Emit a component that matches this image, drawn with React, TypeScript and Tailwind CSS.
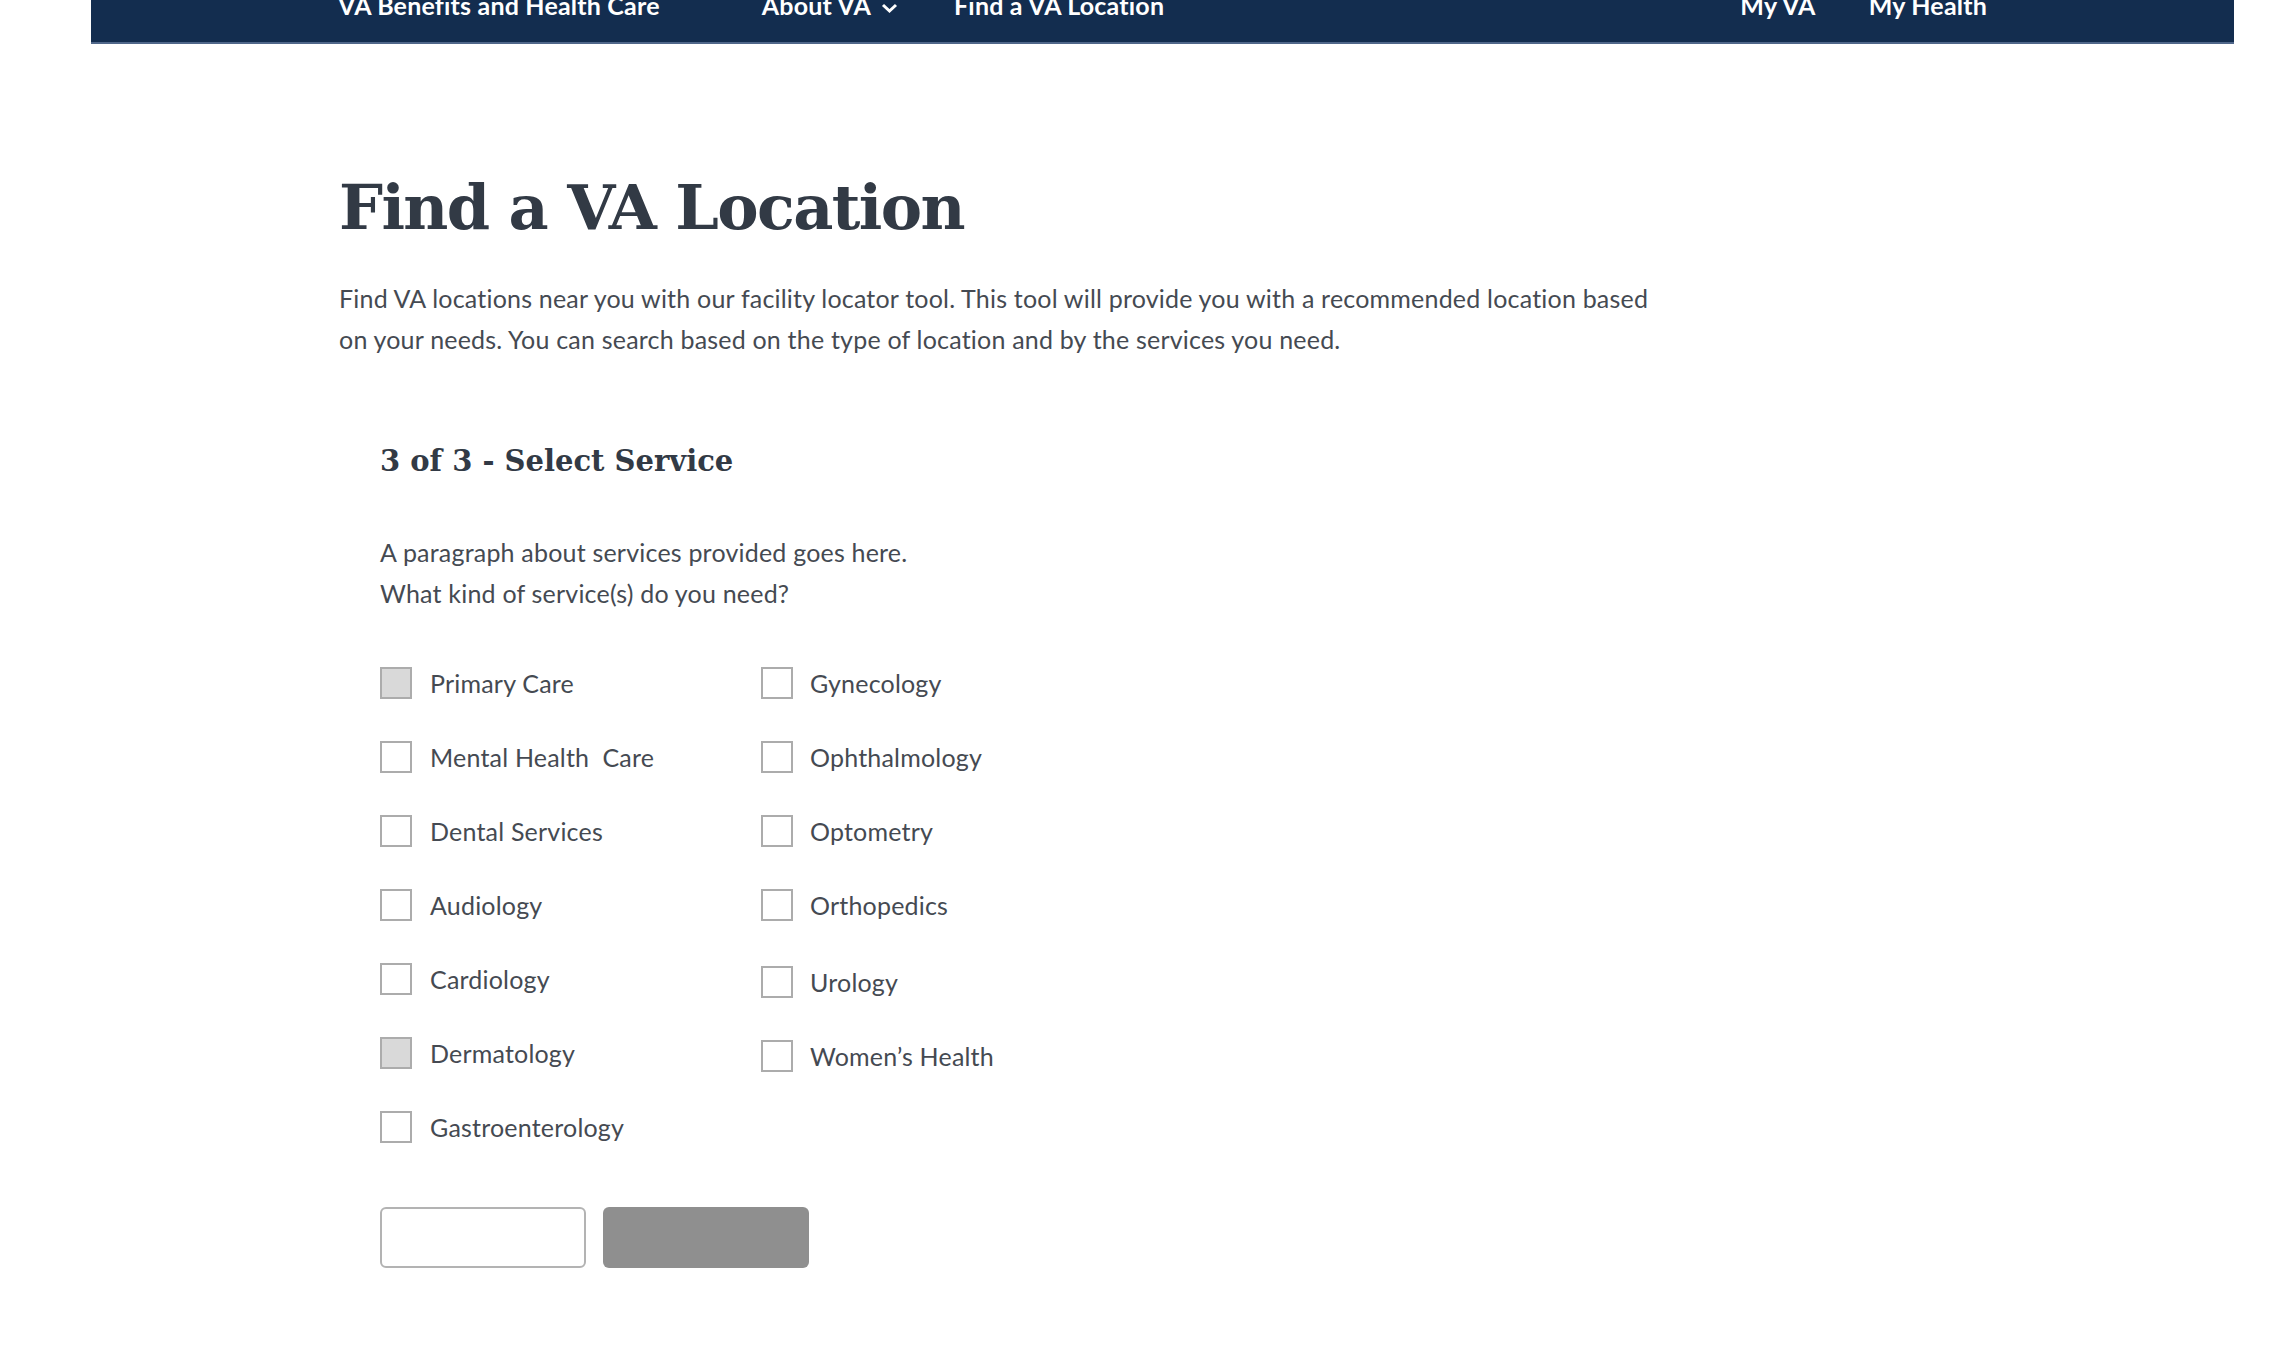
import React from "react";

const body = { fontFamily: "Lato, 'Open Sans', sans-serif" };
const slab = { fontFamily: "'DejaVu Serif', 'Liberation Serif', serif" };

type Item = { label: string; checked?: boolean; shift?: boolean };

const left: Item[] = [
  { label: "Primary Care", checked: true },
  { label: "Mental Health  Care" },
  { label: "Dental Services" },
  { label: "Audiology" },
  { label: "Cardiology" },
  { label: "Dermatology", checked: true },
  { label: "Gastroenterology" },
];

const right: Item[] = [
  { label: "Gynecology" },
  { label: "Ophthalmology" },
  { label: "Optometry" },
  { label: "Orthopedics" },
  { label: "Urology", shift: true },
  { label: "Women\u2019s Health" },
];

function Check({ item, gapClass }: { item: Item; gapClass: string }) {
  return (
    <div className={`flex items-center h-[32px] ${gapClass} ${item.shift ? "mt-[3px]" : ""}`}>
      <span
        className={`block w-[32px] h-[32px] shrink-0 border-2 border-[#acacac] ${
          item.checked ? "bg-[#d9d9d9]" : "bg-white"
        }`}
      />
      <span
        className="text-[25px] leading-[32px] tracking-[0.2px] text-[#454a52] whitespace-pre"
        style={body}
      >
        {item.label}
      </span>
    </div>
  );
}

export default function App() {
  return (
    <div className="min-h-[1356px] bg-white" style={body}>
      <div className="pl-[91px] pr-[38px]">
        <nav className="h-[44px] bg-[#132d4f] border-b-2 border-[#50678a] overflow-hidden flex justify-between pl-[247px] pr-[247px]">
          <div className="flex items-start -mt-[7px] text-white font-bold text-[25px] leading-[25px] tracking-[0.2px]">
            <span>VA Benefits and Health Care</span>
            <span className="ml-[102px] flex items-center gap-[10px]">
              About VA
              <svg width="17" height="12" viewBox="0 0 17 12" className="mt-[5px]">
                <polyline points="2,3 8.5,9 15,3" fill="none" stroke="white" strokeWidth="3" />
              </svg>
            </span>
            <span className="ml-[56px]">Find a VA Location</span>
          </div>
          <div className="flex items-start -mt-[7px] text-white font-bold text-[25px] leading-[25px] tracking-[0.2px] gap-[53px]">
            <span>My VA</span>
            <span>My Health</span>
          </div>
        </nav>
      </div>

      <main className="pl-[339px]">
        <h1
          className="mt-[124px] text-[62px] leading-[80px] font-bold text-[#323a45] tracking-[-1.6px]"
          style={slab}
        >
          Find a VA Location
        </h1>
        <p className="mt-[30px] text-[25px] leading-[41px] tracking-[0.2px] text-[#454a52]">
          Find VA locations near you with our facility locator tool. This tool will provide you with a recommended location based
          <br />
          on your needs. You can search based on the type of location and by the services you need.
        </p>

        <section className="pl-[41px]">
          <h2 className="mt-[81px] text-[29px] leading-[40px] font-bold text-[#323a45]" style={slab}>
            3 of 3 - Select Service
          </h2>
          <p className="mt-[51px] text-[25px] leading-[41px] tracking-[0.2px] text-[#454a52]">
            A paragraph about services provided goes here.
            <br />
            What kind of service(s) do you need?
          </p>

          <div className="mt-[53px] flex">
            <div className="w-[381px] flex flex-col gap-[42px]">
              {left.map((it) => (
                <Check key={it.label} item={it} gapClass="gap-[18px]" />
              ))}
            </div>
            <div className="flex flex-col gap-[42px]">
              {right.map((it) => (
                <Check key={it.label} item={it} gapClass="gap-[17px]" />
              ))}
            </div>
          </div>

          <div className="mt-[64px] flex gap-[17px]">
            <button className="w-[206px] h-[61px] rounded-[6px] border-2 border-[#b3b3b3] bg-white" />
            <button className="w-[206px] h-[61px] rounded-[6px] bg-[#8f8f8f]" />
          </div>
        </section>
      </main>
    </div>
  );
}
